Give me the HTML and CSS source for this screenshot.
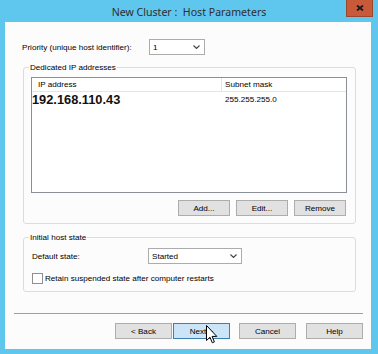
FILE: index.html
```html
<!DOCTYPE html>
<html>
<head>
<meta charset="utf-8">
<link rel="stylesheet" href="styles.css">
</head>
<body>
<div class="window">
  <div class="titlebar">
    <span class="title">New Cluster :&nbsp; Host Parameters</span>
    <div class="close"><svg width="8" height="6" viewBox="0 0 8 6"><path d="M1 0.5 L7 5.5 M7 0.5 L1 5.5" stroke="#1a1a1a" stroke-width="1.8"/></svg></div>
  </div>
  <div class="client">
    <div class="prio">
      <span class="prio-lbl">Priority (unique host identifier):</span>
      <div class="combo combo-prio"><span>1</span><svg class="chev" width="7" height="4" viewBox="0 0 7 4"><polyline points="0.5,0.5 3.5,3.5 6.5,0.5" fill="none" stroke="#444" stroke-width="1.1"/></svg></div>
    </div>
    <div class="group g1">
      <div class="legend">Dedicated IP addresses</div>
      <div class="list">
        <div class="lhead"><div class="c1">IP address</div><div class="c2">Subnet mask</div></div>
        <div class="lrow"><div class="c1 ip">192.168.110.43</div><div class="c2">255.255.255.0</div></div>
      </div>
      <div class="btnrow">
        <div class="btn">Add...</div>
        <div class="btn">Edit...</div>
        <div class="btn">Remove</div>
      </div>
    </div>
    <div class="group g2">
      <div class="legend">Initial host state</div>
      <div class="state-row">
        <span class="state-lbl">Default state:</span>
        <div class="combo combo-state"><span>Started</span><svg class="chev" width="7" height="4" viewBox="0 0 7 4"><polyline points="0.5,0.5 3.5,3.5 6.5,0.5" fill="none" stroke="#444" stroke-width="1.1"/></svg></div>
      </div>
      <div class="chk-row">
        <div class="chk"></div>
        <span class="chk-lbl">Retain suspended state after computer restarts</span>
      </div>
    </div>
    <div class="sep"></div>
    <div class="footer">
      <div class="btn fbtn back">&lt; Back</div>
      <div class="btn fbtn next">Next &gt;</div>
      <div class="btn fbtn cancel">Cancel</div>
      <div class="btn fbtn help">Help</div>
    </div>
  </div>
  <svg class="cursor" width="12" height="19" viewBox="0 0 12 19"><path d="M0.5 0.5 L0.5 15.5 L4 12.2 L6.3 17.8 L8.4 16.9 L6.1 11.4 L10.8 11.4 Z" fill="#fff" stroke="#000" stroke-width="1"/></svg>
</div>
</body>
</html>
```
FILE: styles.css
```css
body {
  margin: 0;
  width: 378px;
  height: 354px;
  overflow: hidden;
  font-family: "Liberation Sans", Arial, sans-serif;
}
.window {
  width: 378px;
  height: 354px;
  background: #5fc6ee;
  position: relative;
  display: flex;
  flex-direction: column;
}
.titlebar {
  height: 22px;
  position: relative;
  display: flex;
  justify-content: center;
  align-items: center;
}
.title {
  font-family: "Noto Sans", sans-serif;
  font-size: 10.6px;
  color: #2e2e2e;
  padding-top: 1px;
}
.close {
  position: absolute;
  top: 0;
  right: 5px;
  width: 27px;
  height: 17px;
  box-sizing: border-box;
  background: #c85a3a;
  border: 1px solid #9c4630;
  border-top: 0;
  display: flex;
  align-items: center;
  justify-content: center;
}
.client {
  margin: 0 7px 0 5px;
  height: 327px;
  box-sizing: border-box;
  background: #fcfcfd;
  padding-top: 17px;
  font-size: 8.1px;
  color: #000;
}
.prio {
  display: flex;
  align-items: center;
  margin-left: 17px;
  height: 16px;
}
.prio-lbl { width: 127px; }
.combo {
  height: 16px;
  box-sizing: border-box;
  border: 1px solid #acacac;
  background: #fff;
  display: flex;
  align-items: center;
  justify-content: space-between;
  padding: 0 4px 0 3px;
}
.combo-prio { width: 56px; }
.combo-state { width: 94px; }
.group {
  border: 1px solid #dcdcdc;
  border-radius: 3px;
  margin-left: 18px;
  width: 333px;
  box-sizing: border-box;
}
.g1 { margin-top: 12px; height: 157px; }
.g2 { margin-top: 13px; height: 55px; }
.legend {
  display: table;
  margin: -6px 0 0 5px;
  padding: 0 1px;
  background: #fcfcfd;
  line-height: 11px;
  height: 11px;
}
.list {
  margin: 4px 0 0 7px;
  width: 316px;
  height: 116px;
  box-sizing: border-box;
  border: 1px solid #8a8f98;
  background: #fff;
}
.lhead {
  display: flex;
  height: 14px;
  box-sizing: border-box;
  border-bottom: 1px solid #e5e5e5;
  line-height: 13px;
}
.lhead .c1 {
  width: 190px;
  box-sizing: border-box;
  padding-left: 6px;
  border-right: 1px solid #e5e5e5;
}
.lhead .c2 { padding-left: 3px; }
.lrow {
  display: flex;
  align-items: center;
  height: 14px;
}
.lrow .c1 { width: 190px; }
.lrow .c2 { padding-left: 3px; }
.ip {
  font-weight: bold;
  font-size: 12.8px;
  color: #111;
}
.btnrow {
  display: flex;
  justify-content: flex-end;
  gap: 6px;
  margin: 7px 9px 0 0;
}
.btn {
  width: 52px;
  height: 16px;
  box-sizing: border-box;
  border: 1px solid #adadad;
  background: #e1e1e1;
  display: flex;
  align-items: center;
  justify-content: center;
  color: #000;
}
.state-row {
  display: flex;
  align-items: center;
  margin: 5px 0 0 8px;
  height: 16px;
}
.state-lbl { width: 116px; }
.chk-row {
  display: flex;
  align-items: center;
  margin: 9px 0 0 8px;
}
.chk {
  width: 11px;
  height: 11px;
  box-sizing: border-box;
  border: 1px solid #8f8f8f;
  background: #fff;
}
.chk-lbl { margin-left: 2px; }
.sep {
  margin: 21px 0 0 9px;
  width: 349px;
  height: 0;
  border-top: 1px solid #a0a0a0;
}
.footer {
  display: flex;
  justify-content: flex-end;
  margin: 9px 8px 0 0;
}
.fbtn { width: 57px; }
.next {
  margin-left: 1px;
  background: #cce4f7;
  border-color: #3c7fb1;
}
.cancel { margin-left: 9px; }
.help { margin-left: 10px; }
.cursor {
  position: absolute;
  left: 206px;
  top: 325px;
}
```
